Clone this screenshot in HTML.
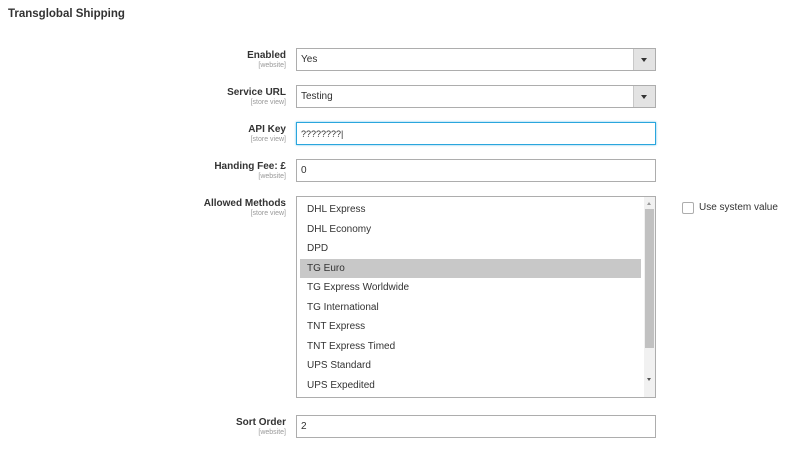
<!DOCTYPE html>
<html><head><style>
body{margin:0;width:800px;height:454px;background:#fff;font-family:"Liberation Sans",sans-serif;color:#303030;position:relative;overflow:hidden}
.a{position:absolute}
h1{position:absolute;left:8px;top:8px;margin:0;font-size:11.5px;font-weight:bold;color:#333}
.lab{position:absolute;right:514px;text-align:right;font-size:10px;font-weight:bold;color:#333;line-height:11px}
.lab small{display:block;font-size:7px;font-weight:normal;color:#999;line-height:9px}
.inp{position:absolute;left:296px;border:1px solid #adadad;background:#fff;font-size:10px;line-height:22px;box-sizing:border-box;padding-left:4px;height:23px;width:360px}
.sel .btn{position:absolute;right:0;top:0;width:21px;height:21px;background:#e3e3e3;border-left:1px solid #c8c8c8}
.sel .btn:after{content:"";position:absolute;left:7px;top:9px;border-left:3px solid transparent;border-right:3px solid transparent;border-top:4px solid #333}
.ms{position:absolute;left:296px;top:196px;width:360px;height:202px;border:1px solid #adadad;box-sizing:border-box}
.it{position:absolute;left:3px;width:341px;height:19px;font-size:10px;line-height:20px;padding-left:7px;box-sizing:border-box;color:#333}
</style></head><body>
<h1>Transglobal Shipping</h1>
<div class="lab" style="top:50px">Enabled<small>[website]</small></div>
<div class="inp sel" style="top:48px">Yes<div class="btn"></div></div>
<div class="lab" style="top:87px">Service URL<small>[store view]</small></div>
<div class="inp sel" style="top:85px">Testing<div class="btn"></div></div>
<div class="lab" style="top:124px">API Key<small>[store view]</small></div>
<div class="inp" style="top:122px;border-color:#2aa6dd;box-shadow:0 0 2px #68c0ea;font-size:9px">????????|</div>
<div class="lab" style="top:161px">Handing Fee: £<small>[website]</small></div>
<div class="inp" style="top:159px">0</div>
<div class="lab" style="top:198px">Allowed Methods<small>[store view]</small></div>
<div class="ms">
<div class="it" style="top:3px">DHL Express</div>
<div class="it" style="top:22.5px">DHL Economy</div>
<div class="it" style="top:42px">DPD</div>
<div class="it" style="top:61.5px;background:#c8c8c8">TG Euro</div>
<div class="it" style="top:81px">TG Express Worldwide</div>
<div class="it" style="top:100.5px">TG International</div>
<div class="it" style="top:120px">TNT Express</div>
<div class="it" style="top:139.5px">TNT Express Timed</div>
<div class="it" style="top:159px">UPS Standard</div>
<div class="it" style="top:178.5px">UPS Expedited</div>
<div class="a" style="left:347px;top:0;width:11px;height:200px;background:#f1f1f1"></div>
<div class="a" style="left:348px;top:12px;width:9px;height:139px;background:#c1c1c1"></div>
<div class="a" style="left:350px;top:5px;border-left:2px solid transparent;border-right:2px solid transparent;border-bottom:3px solid #999"></div>
<div class="a" style="left:350px;top:181px;border-left:2px solid transparent;border-right:2px solid transparent;border-top:3px solid #555"></div>
</div>
<div class="a" style="left:682px;top:202px;width:10px;height:10px;border:1px solid #adadad;border-radius:2px"></div>
<div class="a" style="left:699px;top:202px;font-size:10px;color:#333">Use system value</div>
<div class="lab" style="top:417px">Sort Order<small>[website]</small></div>
<div class="inp" style="top:415px">2</div>
</body></html>
